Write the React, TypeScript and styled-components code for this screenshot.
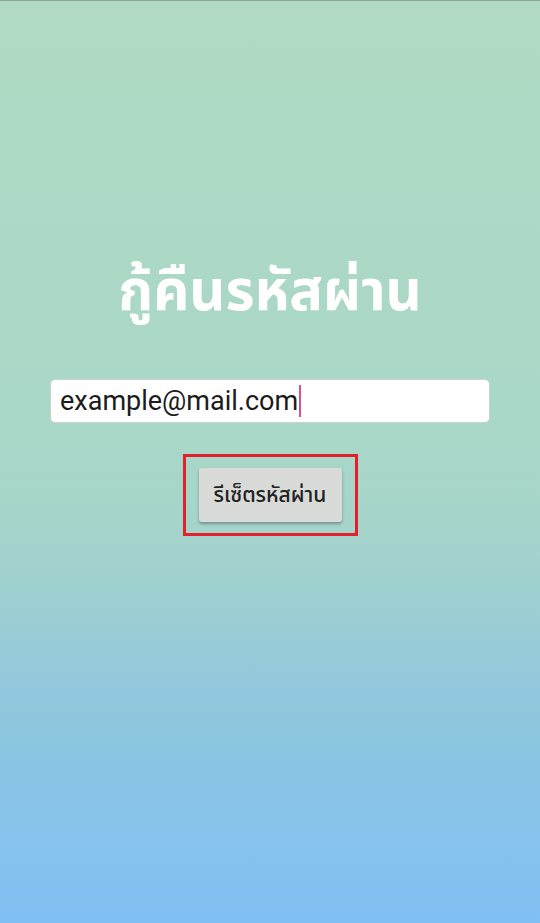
import React from 'react';
import styled, { createGlobalStyle } from 'styled-components';

const GlobalStyle = createGlobalStyle`
  html, body {
    margin: 0;
    padding: 0;
  }
  body {
    font-family: 'Noto Sans', 'Noto Sans Thai', Roboto, sans-serif;
  }
`;

const Screen = styled.div`
  width: 540px;
  height: 923px;
  box-sizing: border-box;
  border-top: 1px solid #8fa19a;
  background: linear-gradient(
    180deg,
    #b0dac3 0%,
    #a9d7c8 48%,
    #a3d3cc 60%,
    #97cbd7 70%,
    #8cc5e1 81%,
    #80bff4 100%
  );
  display: flex;
  flex-direction: column;
  align-items: center;
  padding-top: 244px;
`;

const Title = styled.h1`
  margin: 0;
  font-family: 'Noto Sans', 'Noto Sans Thai', sans-serif;
  font-size: 56px;
  font-weight: 700;
  color: #ffffff;
  line-height: 86px;
`;

const Field = styled.div`
  margin-top: 48px;
  width: 440px;
  height: 44px;
  box-sizing: border-box;
  background: #ffffff;
  border: 1px solid #c7d3cc;
  border-radius: 5px;
  display: flex;
  align-items: center;
  padding-left: 9px;
  font-family: Roboto, 'Noto Sans', sans-serif;
  font-size: 27px;
  color: #1c1c1c;
`;

const Caret = styled.span`
  display: inline-block;
  width: 2px;
  height: 32px;
  margin-left: 1px;
  background: #d6538a;
`;

const Highlight = styled.div`
  margin-top: 31px;
  width: 175px;
  height: 82px;
  box-sizing: border-box;
  border: 3px solid #e3202b;
  display: flex;
  align-items: center;
  justify-content: center;
`;

const ResetButton = styled.button`
  width: 143px;
  height: 54px;
  border: none;
  border-radius: 3px;
  background: #d9dbd8;
  box-shadow: 0 2px 3px rgba(0, 0, 0, 0.3);
  font-family: 'Noto Sans', 'Noto Sans Thai', sans-serif;
  font-size: 21px;
  font-weight: 500;
  color: #222222;
  padding: 0;
  cursor: pointer;
`;

export default function App() {
  return (
    <>
      <GlobalStyle />
      <Screen>
        <Title>กู้คืนรหัสผ่าน</Title>
        <Field>
          example@mail.com
          <Caret />
        </Field>
        <Highlight>
          <ResetButton>รีเซ็ตรหัสผ่าน</ResetButton>
        </Highlight>
      </Screen>
    </>
  );
}
